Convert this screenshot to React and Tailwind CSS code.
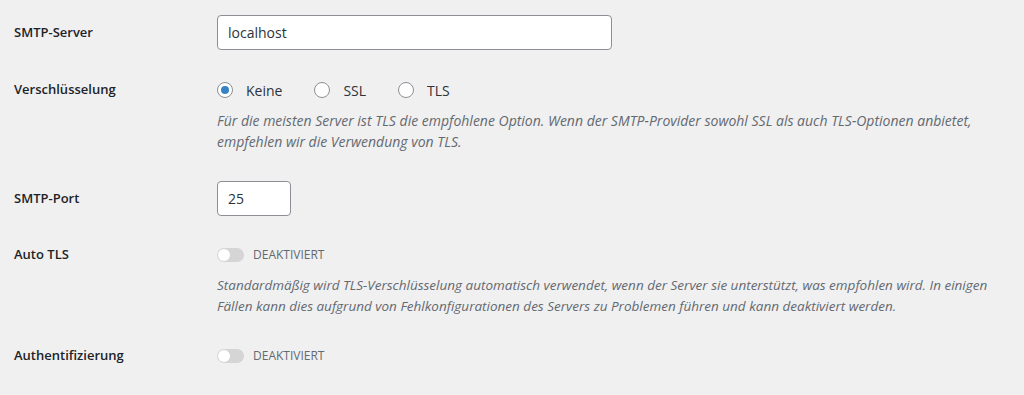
import React from "react";

const font = { fontFamily: '"Open Sans", "Noto Sans", sans-serif' };

function Label({ children, h }) {
  return (
    <div className={`w-[203px] shrink-0 flex items-center ${h}`}>
      <span className="text-[13px] font-semibold text-[#1d2327]">{children}</span>
    </div>
  );
}

function Radio({ checked, label }) {
  return (
    <label className="flex items-center">
      <span className="w-4 h-4 rounded-full border border-[#8c8f94] bg-white flex items-center justify-center">
        {checked && <span className="w-2 h-2 rounded-full bg-[#3582c4]" />}
      </span>
      <span className="ml-[13px] text-[14px] text-[#2c3338]">{label}</span>
    </label>
  );
}

function Toggle() {
  return (
    <div className="flex items-center h-5">
      <span className="w-[27px] h-[14px] rounded-full bg-[#d5d5d5] flex items-center px-[1px]">
        <span className="w-3 h-3 rounded-full bg-white" />
      </span>
      <span className="ml-[9px] text-[12px] text-[#646970] uppercase">Deaktiviert</span>
    </div>
  );
}

export default function App() {
  return (
    <div className="w-[1024px] h-[395px] bg-[#f0f0f1] pl-[14px] overflow-hidden" style={font}>
      <div className="flex pt-[15px] pb-[15px]">
        <Label h="h-[35px]">SMTP-Server</Label>
        <div className="w-[395px] h-[35px] border border-[#8c8f94] rounded-[4px] bg-white flex items-center px-[10px] text-[14px] text-[#2c3338]">
          localhost
        </div>
      </div>
      <div className="flex pt-[15px] pb-[15px]">
        <Label h="h-5">Verschlüsselung</Label>
        <div>
          <div className="flex items-center h-5 gap-[32px]">
            <Radio checked label="Keine" />
            <Radio label="SSL" />
            <Radio label="TLS" />
          </div>
          <p className="mt-[10px] text-[14px] leading-[21px] italic text-[#646970] whitespace-nowrap">
            Für die meisten Server ist TLS die empfohlene Option. Wenn der SMTP-Provider sowohl SSL als auch TLS-Optionen anbietet,
            <br />
            empfehlen wir die Verwendung von TLS.
          </p>
        </div>
      </div>
      <div className="flex pt-[14px] pb-[15px]">
        <Label h="h-[35px]">SMTP-Port</Label>
        <div className="w-[74px] h-[35px] border border-[#8c8f94] rounded-[4px] bg-white flex items-center px-[10px] text-[14px] text-[#2c3338]">
          25
        </div>
      </div>
      <div className="flex pt-[14px] pb-[15px]">
        <Label h="h-5">Auto TLS</Label>
        <div>
          <Toggle />
          <p className="mt-[10px] text-[13.5px] leading-[21px] italic text-[#646970] whitespace-nowrap">
            Standardmäßig wird TLS-Verschlüsselung automatisch verwendet, wenn der Server sie unterstützt, was empfohlen wird. In einigen
            <br />
            Fällen kann dies aufgrund von Fehlkonfigurationen des Servers zu Problemen führen und kann deaktiviert werden.
          </p>
        </div>
      </div>
      <div className="flex pt-[14px] pb-[15px]">
        <Label h="h-5">Authentifizierung</Label>
        <Toggle />
      </div>
    </div>
  );
}
